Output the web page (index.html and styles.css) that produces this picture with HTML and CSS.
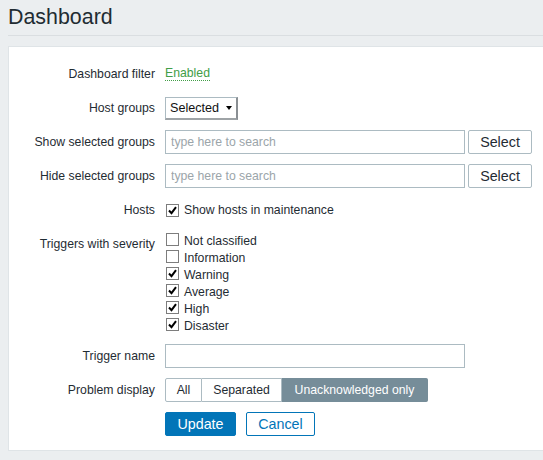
FILE: index.html
```html
<!DOCTYPE html>
<html>
<head>
<meta charset="utf-8">
<link rel="stylesheet" href="styles.css">
</head>
<body>
<div class="header"><h1>Dashboard</h1></div>
<div class="panel">
  <div class="form">
    <div class="row row-first">
      <div class="label">Dashboard filter</div>
      <div class="ctrl"><span class="link-green">Enabled</span></div>
    </div>
    <div class="row">
      <div class="label">Host groups</div>
      <div class="ctrl">
        <div class="select"><span>Selected</span><span class="arrow"></span></div>
      </div>
    </div>
    <div class="row">
      <div class="label">Show selected groups</div>
      <div class="ctrl">
        <input class="text" type="text" placeholder="type here to search">
        <button class="btn-alt">Select</button>
      </div>
    </div>
    <div class="row">
      <div class="label">Hide selected groups</div>
      <div class="ctrl">
        <input class="text" type="text" placeholder="type here to search">
        <button class="btn-alt">Select</button>
      </div>
    </div>
    <div class="row">
      <div class="label">Hosts</div>
      <div class="ctrl">
        <label class="check"><span class="box checked"><svg viewBox="0 0 11 11" width="11" height="11"><path d="M2 5.5 L4.5 8.2 L9 2.2" fill="none" stroke="#000" stroke-width="2"/></svg></span>Show hosts in maintenance</label>
      </div>
    </div>
    <div class="row row-top">
      <div class="label label-top">Triggers with severity</div>
      <div class="ctrl list">
        <label class="check item"><span class="box"></span>Not classified</label>
        <label class="check item"><span class="box"></span>Information</label>
        <label class="check item"><span class="box checked"><svg viewBox="0 0 11 11" width="11" height="11"><path d="M2 5.5 L4.5 8.2 L9 2.2" fill="none" stroke="#000" stroke-width="2"/></svg></span>Warning</label>
        <label class="check item"><span class="box checked"><svg viewBox="0 0 11 11" width="11" height="11"><path d="M2 5.5 L4.5 8.2 L9 2.2" fill="none" stroke="#000" stroke-width="2"/></svg></span>Average</label>
        <label class="check item"><span class="box checked"><svg viewBox="0 0 11 11" width="11" height="11"><path d="M2 5.5 L4.5 8.2 L9 2.2" fill="none" stroke="#000" stroke-width="2"/></svg></span>High</label>
        <label class="check item"><span class="box checked"><svg viewBox="0 0 11 11" width="11" height="11"><path d="M2 5.5 L4.5 8.2 L9 2.2" fill="none" stroke="#000" stroke-width="2"/></svg></span>Disaster</label>
      </div>
    </div>
    <div class="row">
      <div class="label">Trigger name</div>
      <div class="ctrl"><input class="text" type="text"></div>
    </div>
    <div class="row">
      <div class="label">Problem display</div>
      <div class="ctrl">
        <div class="seg">
          <span class="seg-item">All</span>
          <span class="seg-item">Separated</span>
          <span class="seg-item seg-on">Unacknowledged only</span>
        </div>
      </div>
    </div>
    <div class="row">
      <div class="label"></div>
      <div class="ctrl">
        <button class="btn-main">Update</button>
        <button class="btn-cancel">Cancel</button>
      </div>
    </div>
  </div>
</div>
</body>
</html>
```

FILE: styles.css
```css
html, body {
  margin: 0;
  padding: 0;
  background: #ebeef0;
  overflow: hidden;
}
body {
  font-family: "Liberation Sans", Arial, sans-serif;
  font-size: 12.25px;
  color: #1f2c33;
}
.header {
  margin-left: 8px;
  padding-top: 5px;
  padding-bottom: 6px;
  border-bottom: 1px solid #dadee1;
}
.header h1 {
  margin: 0;
  font-size: 21.4px;
  font-weight: normal;
  line-height: 24px;
  color: #1f2c33;
}
.panel {
  margin-top: 10px;
  margin-left: 8px;
  background: #ffffff;
  border: 1px solid #dfe4e7;
  border-right: none;
  padding: 14px 0 14px 0;
}
.form {
  display: flex;
  flex-direction: column;
  gap: 10px;
}
.row {
  display: flex;
  align-items: center;
  min-height: 24px;
}
.row-first {
  height: 25px;
}
.row-top {
  align-items: flex-start;
}
.label {
  width: 146px;
  flex: none;
  text-align: right;
  margin-right: 10px;
}
.label-top {
  line-height: 24px;
}
.ctrl {
  display: flex;
  align-items: center;
}
.link-green {
  color: #429e47;
  border-bottom: 1px dotted #429e47;
  line-height: 14px;
}
.select {
  box-sizing: border-box;
  width: 73px;
  height: 23px;
  border: 1px solid #acbbc2;
  border-right: 2px solid #8a8f93;
  border-bottom: 2px solid #9ea3a6;
  display: flex;
  align-items: center;
  justify-content: space-between;
  padding-left: 4px;
  padding-right: 4px;
  font-size: 12.6px;
  color: #111;
  margin-top: 1px;
}
.arrow {
  width: 0;
  height: 0;
  border-left: 3px solid transparent;
  border-right: 3px solid transparent;
  border-top: 4px solid #000;
}
input.text {
  box-sizing: border-box;
  width: 300px;
  height: 24px;
  border: 1px solid #acbbc2;
  padding: 0 5px;
  font-family: "Liberation Sans", Arial, sans-serif;
  font-size: 12.25px;
  color: #1f2c33;
  background: #fff;
  margin: 0;
  outline: none;
}
input.text::placeholder {
  color: #9ba5aa;
}
button {
  font-family: "Liberation Sans", Arial, sans-serif;
  font-size: 14.3px;
  height: 24px;
  box-sizing: border-box;
  border-radius: 2px;
  margin: 0;
  cursor: pointer;
}
.btn-alt {
  margin-left: 3px;
  width: 64px;
  padding: 0;
  background: #fff;
  border: 1px solid #acbbc2;
  color: #1f2c33;
}
.btn-main {
  width: 71px;
  padding: 0;
  background: #0275b8;
  border: 1px solid #0275b8;
  color: #fff;
}
.btn-cancel {
  margin-left: 10px;
  width: 69px;
  padding: 0;
  background: #fff;
  border: 1px solid #0275b8;
  color: #0275b8;
}
.check {
  display: flex;
  align-items: center;
  color: #1f2c33;
}
.box {
  box-sizing: border-box;
  width: 13px;
  height: 13px;
  border: 1px solid #7d7d7d;
  background: #fff;
  margin-left: 1px;
  margin-right: 5px;
  display: flex;
  align-items: center;
  justify-content: center;
}
.list {
  flex-direction: column;
  align-items: flex-start;
}
.item {
  height: 17px;
}
.item .box {
  margin-bottom: 2px;
}
.seg {
  display: flex;
  height: 24px;
}
.seg-item {
  box-sizing: border-box;
  height: 24px;
  display: flex;
  align-items: center;
  justify-content: center;
  border: 1px solid #acbbc2;
  border-left: none;
  background: #fff;
  color: #1f2c33;
}
.seg-item:nth-child(1) {
  width: 37px;
  border-left: 1px solid #acbbc2;
  border-radius: 2px 0 0 2px;
}
.seg-item:nth-child(2) {
  width: 80px;
}
.seg-item:nth-child(3) {
  width: 146px;
}
.seg-on {
  background: #768d99;
  border-color: #768d99;
  color: #fff;
  border-radius: 0 2px 2px 0;
}
```
